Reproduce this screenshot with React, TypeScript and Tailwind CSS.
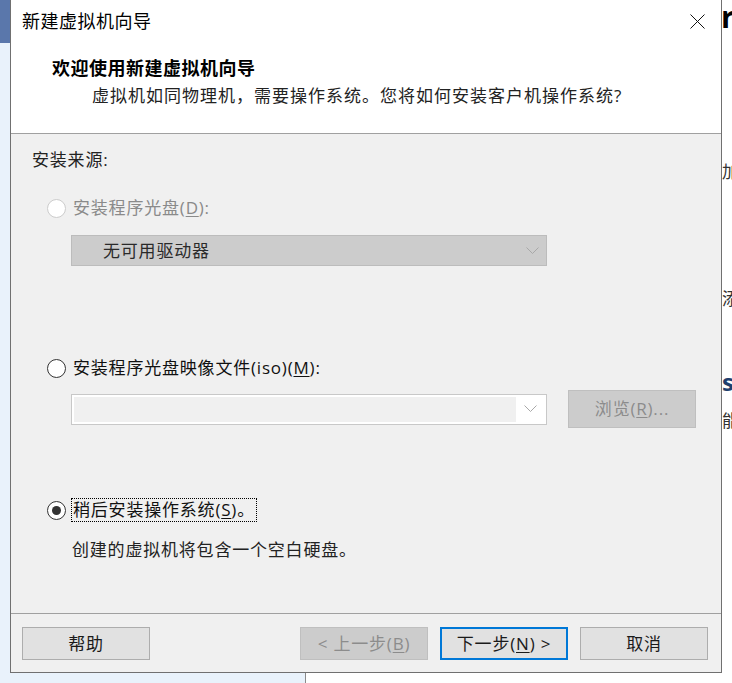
import React from "react";

const font = { fontFamily: '"Open Sans", "Noto Sans CJK SC", sans-serif' };

function Chevron() {
    return (
        <svg width="13" height="8" viewBox="0 0 13 8" fill="none">
            <polyline points="0.5,0.5 6.5,6.5 12.5,0.5" stroke="#a8a8a8" strokeWidth="1" />
        </svg>
    );
}

function Radio({ checked = false, disabled = false }: { checked?: boolean; disabled?: boolean }) {
    return (
        <div
            className={`w-[19px] h-[19px] rounded-full border bg-white flex items-center justify-center shrink-0 ${
                disabled ? "border-[#cccccc]" : "border-[#333333]"
            }`}
        >
            {checked && <div className="w-[9px] h-[9px] rounded-full bg-[#333333]" />}
        </div>
    );
}

function Btn({
    children,
    variant = "normal"
}: {
    children: React.ReactNode;
    variant?: "normal" | "disabled" | "primary";
}) {
    const cls =
        variant === "disabled"
            ? "bg-[#cccccc] border border-[#bfbfbf] text-[#8c8c8c]"
            : variant === "primary"
            ? "bg-[#e1e1e1] border-2 border-[#0078d7] text-[#1a1a1a]"
            : "bg-[#e1e1e1] border border-[#adadad] text-[#1a1a1a]";
    return (
        <div className={`w-[128px] h-[33px] flex items-center justify-center text-[17px] ${cls}`}>
            {children}
        </div>
    );
}

export default function App() {
    return (
        <div className="w-[732px] h-[683px] overflow-hidden bg-white flex flex-col text-[#1a1a1a]" style={font}>
            <div className="flex h-[673px]">
                {/* left edge of window behind */}
                <div className="w-[10px] flex flex-col">
                    <div className="h-[43px] bg-[#5a77ab]" />
                    <div className="flex-1 bg-[#e9f2fb]" />
                </div>

                {/* dialog */}
                <div className="w-[712px] border-l border-r border-b border-[#707070] flex flex-col">
                    <div className="h-[133px] bg-white flex flex-col">
                        <div className="h-[43px] flex items-center justify-between pl-[11px] pr-[16px]">
                            <span className="text-[18px] text-black tracking-[0.5px]">新建虚拟机向导</span>
                            <svg width="15" height="15" viewBox="0 0 15 15">
                                <line x1="0.5" y1="0.5" x2="14.5" y2="14.5" stroke="#111" strokeWidth="1" />
                                <line x1="14.5" y1="0.5" x2="0.5" y2="14.5" stroke="#111" strokeWidth="1" />
                            </svg>
                        </div>
                        <div className="pl-[41px] mt-[12px] h-[26px] flex items-center text-[18px] font-bold text-black tracking-[0.5px]">
                            欢迎使用新建虚拟机向导
                        </div>
                        <div className="pl-[81px] mt-[2px] h-[26px] flex items-center text-[17px] tracking-[1px] text-[#222]">
                            虚拟机如同物理机，需要操作系统。您将如何安装客户机操作系统?
                        </div>
                    </div>
                    <div className="h-px bg-[#a0a0a0]" />

                    {/* body */}
                    <div className="h-[479px] bg-[#f0f0f0] flex flex-col pl-[21px] text-[17px] tracking-[0.8px]">
                        <div className="mt-[14px] h-[24px] flex items-center text-[#222]">安装来源:</div>

                        <div className="mt-[24px] h-[24px] flex items-center gap-[7px] pl-[15px] text-[#8a8a8a]">
                            <Radio disabled />
                            <span>
                                安装程序光盘(<span className="underline underline-offset-2">D</span>):
                            </span>
                        </div>

                        <div className="mt-[15px] ml-[39px] w-[476px] h-[31px] bg-[#cccccc] border border-[#bcbcbc] flex items-center justify-between pl-[31px] pr-[7px] text-[#2a2a2a]">
                            <span>无可用驱动器</span>
                            <Chevron />
                        </div>

                        <div className="mt-[90px] h-[24px] flex items-center gap-[7px] pl-[15px] text-[#111]">
                            <Radio />
                            <span>
                                安装程序光盘映像文件(iso)(<span className="underline underline-offset-2">M</span>):
                            </span>
                        </div>

                        <div className="mt-[10px] ml-[39px] h-[38px] flex items-center gap-[21px]">
                            <div className="w-[476px] h-[31px] border border-[#c8c8c8] bg-white p-[2px] flex">
                                <div className="flex-1 bg-[#f0f0f0]" />
                                <div className="w-[28px] flex items-center justify-center">
                                    <Chevron />
                                </div>
                            </div>
                            <div className="w-[128px] h-[38px] bg-[#cccccc] border border-[#bfbfbf] text-[#8c8c8c] flex items-center justify-center">
                                浏览(<span className="underline underline-offset-2">R</span>)...
                            </div>
                        </div>

                        <div className="mt-[70px] h-[24px] flex items-center gap-[5px] pl-[15px] text-[#111]">
                            <Radio checked />
                            <span className="border border-dotted border-black px-[1px] leading-[22px]">
                                稍后安装操作系统(<span className="underline underline-offset-2">S</span>)。
                            </span>
                        </div>

                        <div className="mt-[16px] h-[24px] flex items-center pl-[40px] text-[#222]">
                            创建的虚拟机将包含一个空白硬盘。
                        </div>
                    </div>
                    <div className="h-px bg-[#a0a0a0]" />

                    {/* footer */}
                    <div className="flex-1 bg-[#f0f0f0] flex items-start pt-[13px] pl-[11px] pr-[13px] tracking-[0.8px]">
                        <Btn>帮助</Btn>
                        <div className="ml-auto flex gap-[12px]">
                            <Btn variant="disabled">
                                &lt; 上一步(<span className="underline underline-offset-2">B</span>)
                            </Btn>
                            <Btn variant="primary">
                                下一步(<span className="underline underline-offset-2">N</span>) &gt;
                            </Btn>
                            <Btn>取消</Btn>
                        </div>
                    </div>
                </div>

                {/* right edge of window behind */}
                <div className="w-[10px] relative overflow-hidden bg-white">
                    <span className="absolute left-[-1px] top-[2px] text-[30px] font-bold text-black leading-none" style={{ fontFamily: '"Open Sans", sans-serif' }}>
                        r
                    </span>
                    <span className="absolute left-[0px] top-[163px] text-[17px] text-[#333] leading-none">加</span>
                    <span className="absolute left-[0px] top-[290px] text-[17px] text-[#333] leading-none">添</span>
                    <span className="absolute left-[0px] top-[370px] text-[24px] font-bold text-[#1f3f6e] leading-none" style={{ fontFamily: '"Open Sans", sans-serif' }}>
                        st
                    </span>
                    <span className="absolute left-[0px] top-[412px] text-[17px] text-[#333] leading-none">能</span>
                </div>
            </div>

            <div className="flex h-[10px]">
                <div className="w-[306px] bg-[#e9f2fb] border-r border-[#8a8a8a]" />
                <div className="flex-1 bg-white" />
            </div>
        </div>
    );
}
